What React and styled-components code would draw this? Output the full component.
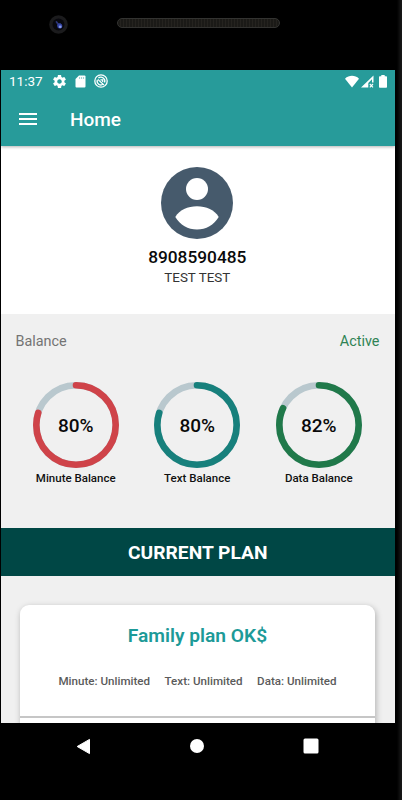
import React from 'react';
import styled, { createGlobalStyle } from 'styled-components';

const GlobalStyle = createGlobalStyle`
  * {
    box-sizing: border-box;
  }

  body {
    margin: 0;
    background-color: #000;
    font-family: Roboto, 'Liberation Sans', sans-serif;
  }
`;

const Device = styled.div`
  display: flex;
  flex-direction: column;
  width: 402px;
  height: 800px;
  padding: 0 7.5px 0 1px;
  overflow: hidden;
  background: linear-gradient(to right, #000 397px, #0b0b0b 399px, #161616 401px);
`;

const TopBezel = styled.div`
  display: flex;
  flex: none;
  height: 70px;
  padding: 14px 0 0 47px;
`;

const Speaker = styled.div`
  width: 163px;
  height: 10px;
  margin: 4px 0 0 49px;
  border: 1px solid #333331;
  border-radius: 5px;
  background: repeating-linear-gradient(to right, #1b1a17 0 2px, #25231f 2px 3px);
`;

const Screen = styled.main`
  display: flex;
  flex-direction: column;
  flex: none;
  height: 653.4px;
  overflow: hidden;
  background-color: #f0f0f0;
`;

const Header = styled.header`
  flex: none;
  z-index: 1;
  height: 76px;
  color: #fff;
  background-color: #279b9a;
  box-shadow: 0 1px 3px rgba(0, 0, 0, 0.3);
`;

const StatusBar = styled.div`
  display: flex;
  align-items: center;
  justify-content: space-between;
  height: 22px;
  padding: 0 7.5px 0 8px;
`;

const StatusGroup = styled.div`
  display: flex;
  align-items: center;
  gap: ${(props) => props.$gap}px;
`;

const Clock = styled.span`
  width: 35.5px;
  font-size: 13.5px;
  line-height: 16px;
`;

const Toolbar = styled.div`
  display: flex;
  align-items: center;
  height: 54px;
  padding: 0 0 1px 18px;
  gap: 33px;
`;

const Title = styled.h1`
  margin: 3px 0 0;
  font-size: 19px;
  font-weight: 500;
  line-height: 24px;
`;

const Profile = styled.section`
  display: flex;
  flex-direction: column;
  flex: none;
  align-items: center;
  height: 168px;
  padding: 21px 1px 0 0;
  background-color: #fff;
`;

const Phone = styled.strong`
  margin-top: 8px;
  font-size: 17.3px;
  font-weight: 500;
  line-height: 20px;
  color: #0a0a0a;
`;

const Name = styled.span`
  margin-top: 3px;
  font-size: 13.4px;
  line-height: 16px;
  color: #333;
`;

const Balance = styled.section`
  flex: none;
  height: 214px;
  padding-top: 18px;
`;

const BalanceHeader = styled.div`
  display: flex;
  justify-content: space-between;
  padding: 0 15px 0 14.5px;
  font-size: 14.4px;
  line-height: 20px;
  color: #747474;
`;

const Status = styled.span`
  color: #2f8354;
`;

const Gauges = styled.div`
  display: grid;
  grid-template-columns: repeat(3, 121.5px);
  padding: 30px 0 0 14px;
`;

const GaugeItem = styled.div`
  display: flex;
  flex-direction: column;
  align-items: center;
`;

const Dial = styled.div`
  display: grid;
  place-items: center;
  width: 86px;
  height: 86px;

  > * {
    grid-area: 1 / 1;
  }
`;

const Percent = styled.span`
  margin-top: 2px;
  font-size: 19px;
  font-weight: 500;
  line-height: 24px;
  color: #0a0a0a;
`;

const GaugeLabel = styled.span`
  margin-top: 2px;
  font-size: 11.5px;
  font-weight: 500;
  line-height: 17px;
  color: #111;
`;

const Banner = styled.h2`
  flex: none;
  height: 47.5px;
  margin: 0;
  font-size: 19.2px;
  font-weight: 700;
  line-height: 49px;
  text-align: center;
  color: #fff;
  background-color: #004745;
`;

const PlanCard = styled.section`
  flex: none;
  width: 355px;
  height: 160px;
  margin: 29px 0 0 19px;
  border-radius: 9px;
  background-color: #fff;
  box-shadow: 1px 2px 6px rgba(0, 0, 0, 0.28);
  text-align: center;
`;

const PlanName = styled.h3`
  margin: 0;
  padding-top: 18px;
  font-size: 19.2px;
  font-weight: 600;
  line-height: 25px;
  color: #1d9a98;
`;

const PlanDetails = styled.div`
  display: flex;
  justify-content: center;
  gap: 14.5px;
  height: 70px;
  padding-top: 25px;
  border-bottom: 2px solid #c6c6c6;
  font-size: 11.6px;
  font-weight: 500;
  line-height: 16px;
  color: #5b5b5b;
`;

const NavBar = styled.nav`
  display: flex;
  align-items: center;
  justify-content: space-between;
  height: 46px;
  padding: 0 75.5px 0 75px;
`;

const Camera = () => (
  <svg width="20" height="20" viewBox="0 0 20 20">
    <circle cx="10.5" cy="10.5" r="9.3" fill="#1b1b1d" />
    <circle cx="10.5" cy="10.5" r="6" fill="#08080e" />
    <path d="M8.5 8l2 2.5M10 11l2-1" stroke="#2b3579" strokeWidth="1.8" strokeLinecap="round" />
    <circle cx="11.8" cy="12" r="2.5" fill="#3546a8" />
    <circle cx="12.2" cy="12.8" r="1.4" fill="#8a9be8" />
  </svg>
);

const GearIcon = () => (
  <svg width="13" height="13" viewBox="2 2 20 20" fill="#fff">
    <path d="M19.43 12.98c.04-.32.07-.64.07-.98s-.03-.66-.07-.98l2.11-1.65c.19-.15.24-.42.12-.64l-2-3.46c-.12-.22-.39-.3-.61-.22l-2.49 1c-.52-.4-1.08-.73-1.69-.98l-.38-2.65C14.46 2.18 14.25 2 14 2h-4c-.25 0-.46.18-.49.42l-.38 2.65c-.61.25-1.17.59-1.69.98l-2.49-1c-.23-.09-.49 0-.61.22l-2 3.46c-.13.22-.07.49.12.64l2.11 1.65c-.04.32-.07.65-.07.98s.03.66.07.98l-2.11 1.65c-.19.15-.24.42-.12.64l2 3.46c.12.22.39.3.61.22l2.49-1c.52.4 1.08.73 1.69.98l.38 2.65c.03.24.24.42.49.42h4c.25 0 .46-.18.49-.42l.38-2.65c.61-.25 1.17-.59 1.69-.98l2.49 1c.23.09.49 0 .61-.22l2-3.46c.12-.22.07-.49-.12-.64l-2.11-1.65zM12 15.5c-1.93 0-3.5-1.57-3.5-3.5s1.57-3.5 3.5-3.5 3.5 1.57 3.5 3.5-1.57 3.5-3.5 3.5z" />
  </svg>
);

const SdCardIcon = () => (
  <svg width="11" height="13" viewBox="0 0 11 13">
    <path d="M4 .5h5.5a1 1 0 0 1 1 1v10a1 1 0 0 1-1 1h-8a1 1 0 0 1-1-1V4z" fill="#fff" />
    <path d="M4.6 2v2M6.6 2v2M8.6 2v2" stroke="#7cc2c1" strokeWidth=".8" />
  </svg>
);

const DataSaverIcon = () => (
  <svg width="14" height="14" viewBox="0 0 14 14" fill="none" stroke="#fff">
    <circle cx="7" cy="7" r="6.2" strokeWidth="1.3" />
    <path d="M4.4 4.1a3.9 3.9 0 0 1 6.1 4.5M9 10.3A3.8 3.8 0 0 1 3.3 6" strokeWidth="1.3" />
    <path d="M3.8 5.4l6.2 5.6M6.4 5.9h2.3v2" strokeWidth="1.2" />
  </svg>
);

const WifiIcon = () => (
  <svg width="14" height="13" viewBox="0 0 14 13">
    <path d="M0 3.7C4-.1 10-.1 14 3.7L7 12.5z" fill="#fff" />
  </svg>
);

const SignalIcon = () => (
  <svg width="13" height="13" viewBox="0 0 13 13">
    <path d="M0 12.5L12.5.5v7H11V4.2L7.3 8v4.5z" fill="#fff" />
    <path d="M8.8 9l3.2 3.4M12 9l-3.2 3.4" stroke="#fff" strokeWidth="1.1" />
  </svg>
);

const BatteryIcon = () => (
  <svg width="8" height="13" viewBox="0 0 8 13">
    <path d="M2.3 0h3.4v1.2h1.5a.8.8 0 0 1 .8.8v10a.8.8 0 0 1-.8.8H.8A.8.8 0 0 1 0 12V2a.8.8 0 0 1 .8-.8h1.5z" fill="#fff" />
  </svg>
);

const MenuIcon = () => (
  <svg width="18" height="12" viewBox="0 0 18 12" fill="#fff">
    <path d="M0 0h18v2H0zM0 5h18v2H0zM0 10h18v2H0z" />
  </svg>
);

const Avatar = () => (
  <svg width="72" height="72" viewBox="0 0 72 72">
    <circle cx="36" cy="36" r="36" fill="#465a6c" />
    <circle cx="36" cy="22" r="11" fill="#fff" />
    <path d="M14.3 50C18 43 27 39.2 36 39.2S54 43 57.7 50C53 58 45 62.5 36 62.5S19 58 14.3 50z" fill="#fff" />
  </svg>
);

const Ring = ({ value, color }) => (
  <svg width="86" height="86" viewBox="0 0 86 86" fill="none" strokeWidth="6.6">
    <circle cx="43" cy="43" r="39.7" stroke="#b9c8ce" />
    <circle
      cx="43"
      cy="43"
      r="39.7"
      stroke={color}
      strokeLinecap="round"
      pathLength="100"
      strokeDasharray={`${value} 100`}
      transform="rotate(-90 43 43)"
    />
  </svg>
);

const Gauge = ({ value, color, label }) => (
  <GaugeItem>
    <Dial>
      <Ring value={value} color={color} />
      <Percent>{value}%</Percent>
    </Dial>
    <GaugeLabel>{label}</GaugeLabel>
  </GaugeItem>
);

const balances = [
  { label: 'Minute Balance', value: 80, color: '#cf4349' },
  { label: 'Text Balance', value: 80, color: '#17807c' },
  { label: 'Data Balance', value: 82, color: '#20794a' },
];

const App = () => (
  <>
    <GlobalStyle />
    <Device>
      <TopBezel>
        <Camera />
        <Speaker />
      </TopBezel>
      <Screen>
        <Header>
          <StatusBar>
            <StatusGroup $gap={8.5}>
              <Clock>11:37</Clock>
              <GearIcon />
              <SdCardIcon />
              <DataSaverIcon />
            </StatusGroup>
            <StatusGroup $gap={2.5}>
              <WifiIcon />
              <SignalIcon />
              <span />
              <BatteryIcon />
            </StatusGroup>
          </StatusBar>
          <Toolbar>
            <MenuIcon />
            <Title>Home</Title>
          </Toolbar>
        </Header>
        <Profile>
          <Avatar />
          <Phone>8908590485</Phone>
          <Name>TEST TEST</Name>
        </Profile>
        <Balance>
          <BalanceHeader>
            <span>Balance</span>
            <Status>Active</Status>
          </BalanceHeader>
          <Gauges>
            {balances.map((item) => (
              <Gauge key={item.label} {...item} />
            ))}
          </Gauges>
        </Balance>
        <Banner>CURRENT PLAN</Banner>
        <PlanCard>
          <PlanName>Family plan OK$</PlanName>
          <PlanDetails>
            <span>Minute: Unlimited</span>
            <span>Text: Unlimited</span>
            <span>Data: Unlimited</span>
          </PlanDetails>
        </PlanCard>
      </Screen>
      <NavBar>
        <svg width="15" height="17" viewBox="0 0 15 17">
          <path d="M1.2 8.5L13.5 1.4v14.2z" fill="#fff" stroke="#fff" strokeLinejoin="round" />
        </svg>
        <svg width="14" height="14" viewBox="0 0 14 14">
          <circle cx="7" cy="7" r="7" fill="#fff" />
        </svg>
        <svg width="16" height="16" viewBox="0 0 16 16">
          <rect x=".5" y=".5" width="15" height="15" rx="1.5" fill="#fff" />
        </svg>
      </NavBar>
    </Device>
  </>
);

export default App;
